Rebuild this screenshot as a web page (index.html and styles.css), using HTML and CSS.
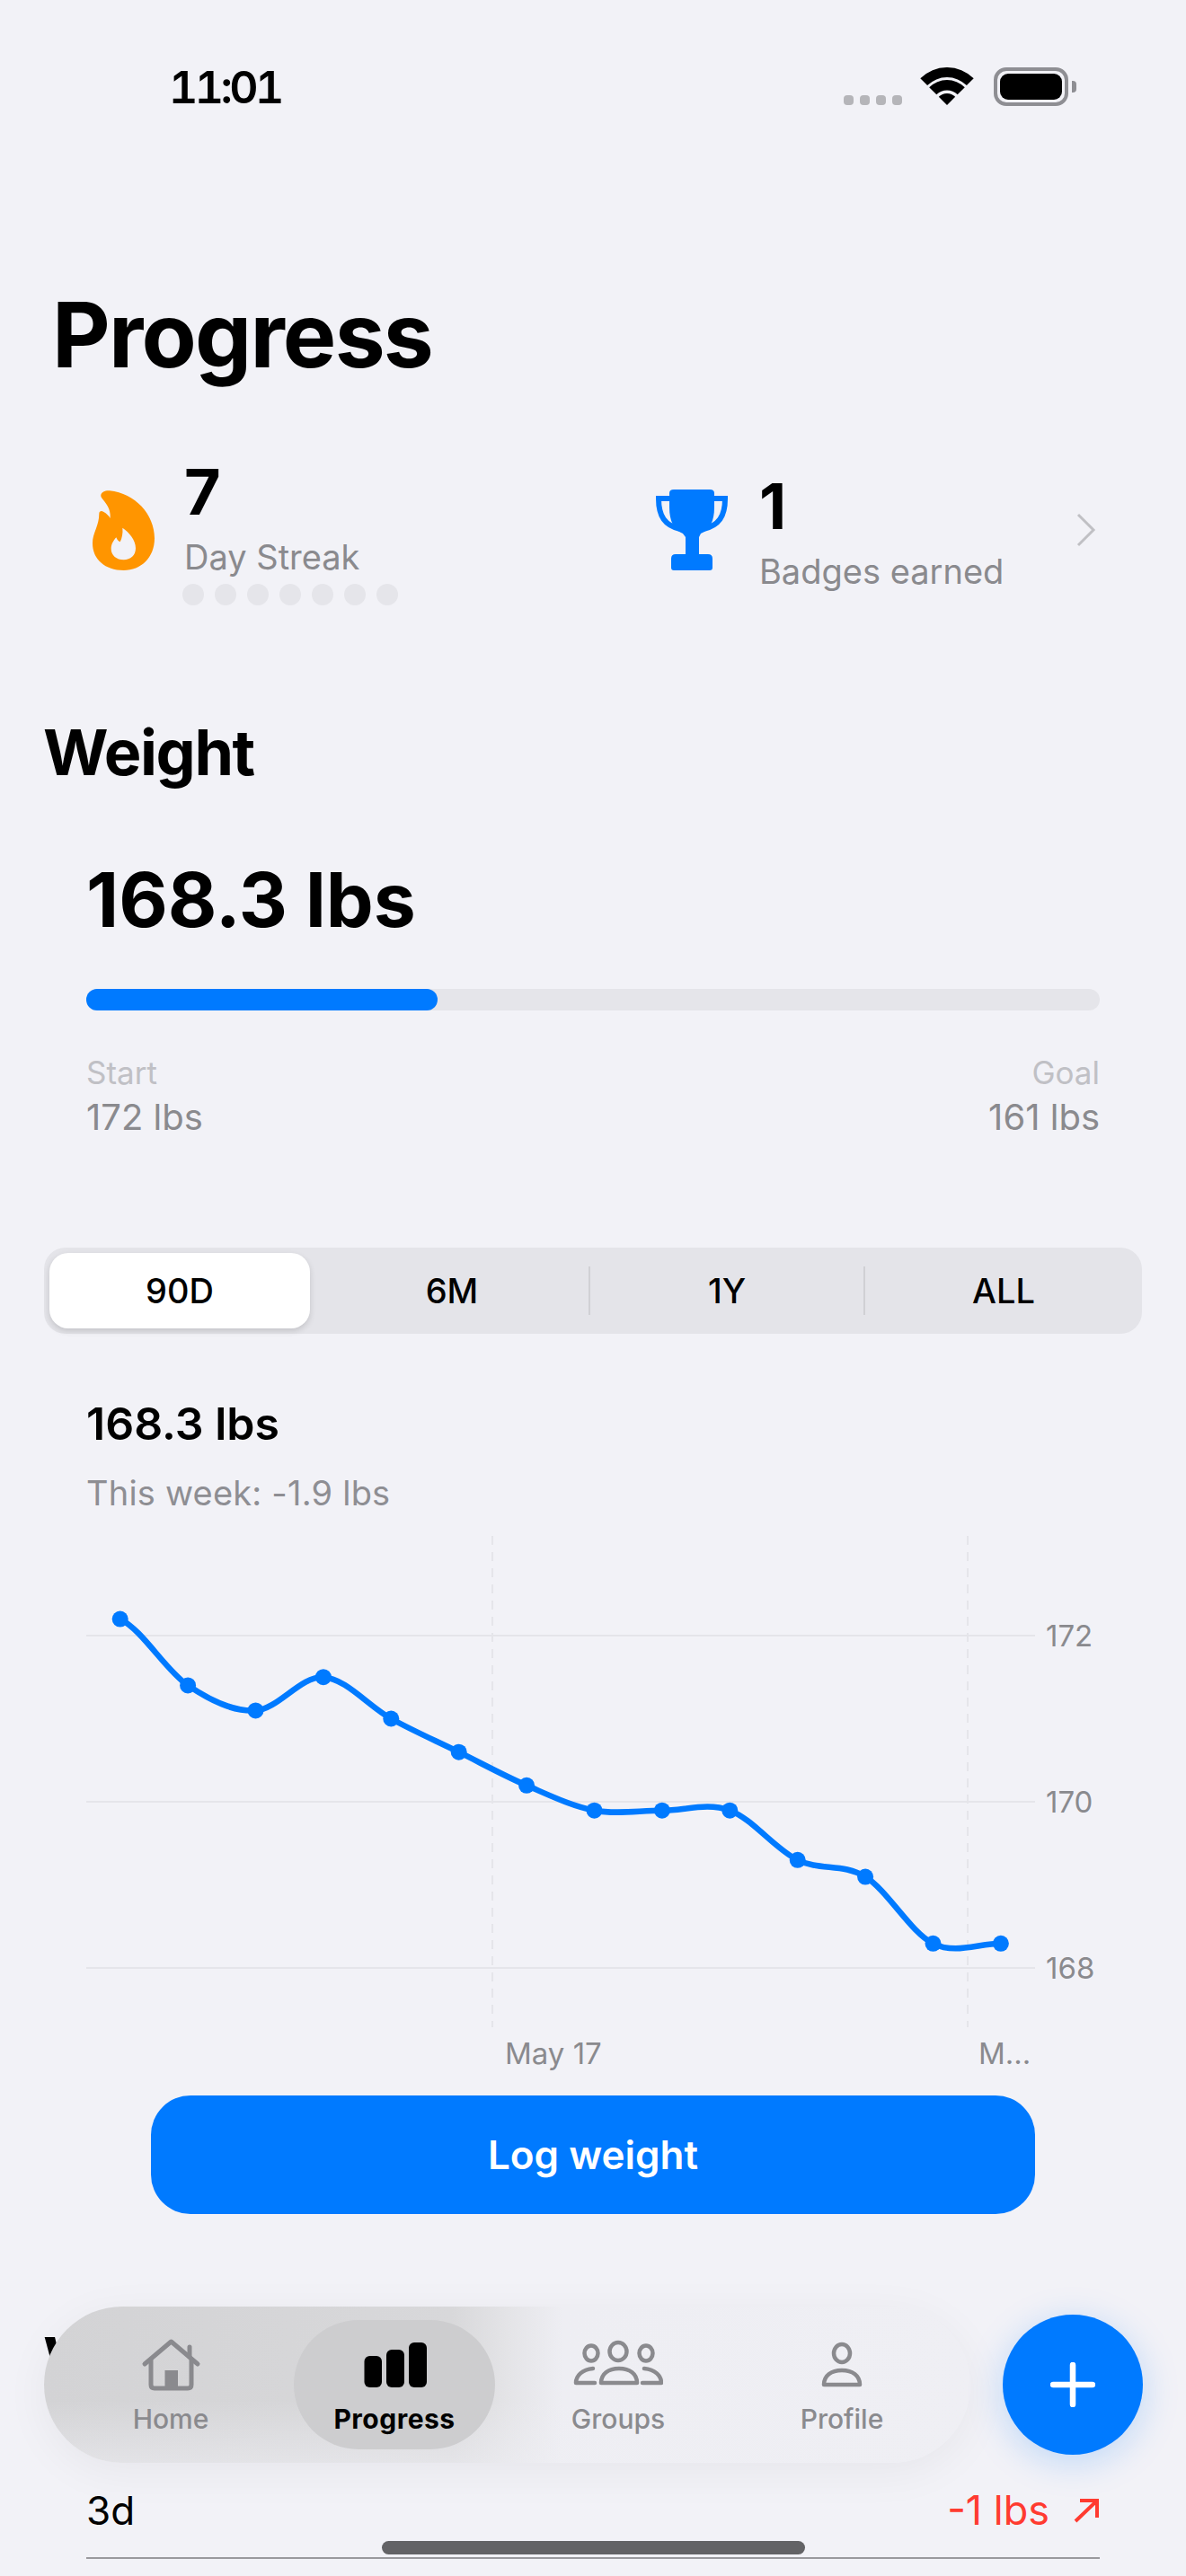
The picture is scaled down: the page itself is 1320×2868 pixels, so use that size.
FILE: index.html
```html
<!DOCTYPE html>
<html lang="en">
<head>
  <meta charset="UTF-8">
  <title>Progress</title>
  <link rel="stylesheet" href="styles.css">
</head>
<body>
<div class="screen">

  <div class="status">
    <span class="time">11:01</span>
    <div class="status-icons">
      <div class="signal"><i></i><i></i><i></i><i></i></div>
      <svg class="wifi" viewBox="-30 -42 60 42" width="60" height="42">
        <path d="M-29.7 -29.7A42 42 0 0 1 29.7 -29.7L21.9 -21.9A31 31 0 0 0 -21.9 -21.9Z"/>
        <path d="M-19.8 -19.8A28 28 0 0 1 19.8 -19.8L11.7 -11.7A16.5 16.5 0 0 0 -11.7 -11.7Z"/>
        <path d="M0 0L-9.2 -9.2A13 13 0 0 1 9.2 -9.2Z"/>
      </svg>
      <div class="battery"><div class="battery-level"></div></div>
      <div class="battery-nub"></div>
    </div>
  </div>

  <h1 class="title">Progress</h1>

  <div class="stats">
    <div class="stat">
      <svg class="flame" viewBox="128 135 207 267" width="69" height="89">
        <path fill="#ff9500" d="M156 150C158 140 170 135 185 136C270 145 335 215 335 295C335 360 290 402 232 402C170 402 128 365 128 312C128 275 150 255 150 212C150 204 158 202 164 206C175 212 183 220 187 228C190 195 170 175 160 162C157 158 155 154 156 150Z"/>
        <path fill="#f2f2f7" d="M228 260C250 275 272 300 272 328C272 352 255 367 232 367C208 367 190 352 190 330C190 315 198 302 207 292C210 300 214 305 220 307C226 295 230 278 228 260Z"/>
      </svg>
      <div>
        <div class="stat-num">7</div>
        <div class="stat-label">Day Streak</div>
        <div class="dots"><i></i><i></i><i></i><i></i><i></i><i></i><i></i></div>
      </div>
    </div>
    <div class="stat stat-badges">
      <svg class="trophy" viewBox="0 0 80 90" width="80" height="90">
        <path class="trophy-handle" d="M16 10H3C3 30 10 40 27 44"/>
        <path class="trophy-handle" d="M64 10H77C77 30 70 40 53 44"/>
        <path fill="#007aff" d="M15 4Q15 0 20 0H60Q65 0 65 4V20C65 35 60 45 50 49L48 53V72H58Q63 72 63 77V87Q63 90 60 90H20Q17 90 17 87V77Q17 72 22 72H33V53L30 49C20 45 15 35 15 20Z"/>
      </svg>
      <div>
        <div class="stat-num">1</div>
        <div class="stat-label">Badges earned</div>
      </div>
      <svg class="chevron" viewBox="0 0 22 38" width="22" height="38">
        <path d="M2 2L19 19L2 36"/>
      </svg>
    </div>
  </div>

  <h2 class="section-title">Weight</h2>

  <div class="weight">
    <div class="weight-now">168.3 lbs</div>
    <div class="bar"><div class="bar-fill"></div></div>
    <div class="weight-ends">
      <div>
        <div class="end-label">Start</div>
        <div class="end-value">172 lbs</div>
      </div>
      <div class="end-right">
        <div class="end-label">Goal</div>
        <div class="end-value">161 lbs</div>
      </div>
    </div>
  </div>

  <div class="segments">
    <div class="seg seg-on">90D</div>
    <div class="seg seg-line">6M</div>
    <div class="seg seg-line">1Y</div>
    <div class="seg">ALL</div>
  </div>

  <div class="chart-head">
    <div class="chart-value">168.3 lbs</div>
    <div class="chart-sub">This week: -1.9 lbs</div>
  </div>

  <svg class="chart" viewBox="96 1700 1130 620" width="1130" height="620">
    <g class="grid">
      <path d="M96 1821H1152"/>
      <path d="M96 2006H1152"/>
      <path d="M96 2191H1152"/>
    </g>
    <g class="grid grid-v">
      <path d="M548 1710V2257"/>
      <path d="M1077 1710V2257"/>
    </g>
    <path class="line" d="M133.7 1802.6C158.8 1814.9 184 1859.4 209.1 1876.4C234.2 1893.4 259.4 1905.9 284.5 1904.4C309.6 1902.9 334.8 1865.7 359.9 1867.2C385 1868.7 410.2 1899.6 435.3 1913.5C460.4 1927.4 485.6 1938.3 510.7 1950.7C535.8 1963.1 561 1977 586.1 1987.8C611.2 1998.6 636.4 2011 661.5 2015.7C686.6 2020.4 711.8 2015.7 736.9 2015.7C762 2015.7 787.2 2006.5 812.3 2015.7C837.4 2024.9 862.6 2058.5 887.7 2070.8C912.8 2083.1 938 2074.1 963.1 2089.6C988.2 2105.1 1013.4 2151.4 1038.5 2163.8C1063.6 2176.2 1088.8 2163.8 1113.9 2163.8"/>
    <g class="points">
      <circle cx="133.7" cy="1802.6" r="9"/>
      <circle cx="209.1" cy="1876.4" r="9"/>
      <circle cx="284.5" cy="1904.4" r="9"/>
      <circle cx="359.9" cy="1867.2" r="9"/>
      <circle cx="435.3" cy="1913.5" r="9"/>
      <circle cx="510.7" cy="1950.7" r="9"/>
      <circle cx="586.1" cy="1987.8" r="9"/>
      <circle cx="661.5" cy="2015.7" r="9"/>
      <circle cx="736.9" cy="2015.7" r="9"/>
      <circle cx="812.3" cy="2015.7" r="9"/>
      <circle cx="887.7" cy="2070.8" r="9"/>
      <circle cx="963.1" cy="2089.6" r="9"/>
      <circle cx="1038.5" cy="2163.8" r="9"/>
      <circle cx="1113.9" cy="2163.8" r="9"/>
    </g>
    <g class="axis">
      <text x="1164" y="1833">172</text>
      <text x="1164" y="2018">170</text>
      <text x="1164" y="2203">168</text>
      <text x="562" y="2298">May 17</text>
      <text x="1089" y="2298">M...</text>
    </g>
  </svg>

  <button class="log-btn">Log weight</button>

  <h2 class="section-title section-next">Weight changes</h2>

  <div class="change">
    <span>3d</span>
    <span class="change-val">-1 lbs
      <svg class="change-arrow" viewBox="0 0 30 30" width="30" height="30">
        <path d="M3 27L26 5M8 4H27V23"/>
      </svg>
    </span>
  </div>

  <nav class="tabbar">
    <div class="tab">
      <svg viewBox="0 0 100 60" width="100" height="60">
        <g class="tab-line">
          <path d="M21 29L50.5 4L80 29"/>
          <path d="M71 21V10"/>
          <path d="M28 25V52Q28 56 32 56H69Q73 56 73 52V25"/>
        </g>
        <rect class="tab-fill" x="43.5" y="36" width="14.5" height="20"/>
      </svg>
      <span>Home</span>
    </div>
    <div class="tab tab-on">
      <svg viewBox="0 0 100 60" width="100" height="60">
        <rect x="16.5" y="20" width="19.5" height="35" rx="6"/>
        <rect x="41" y="13" width="20" height="42" rx="6"/>
        <rect x="66" y="5" width="20" height="50" rx="6"/>
      </svg>
      <span>Progress</span>
    </div>
    <div class="tab">
      <svg viewBox="0 0 100 60" width="100" height="60">
        <g class="tab-line tab-thin">
          <ellipse cx="20" cy="17" rx="7.5" ry="8.5"/>
          <ellipse cx="50" cy="15" rx="9.5" ry="10"/>
          <ellipse cx="81" cy="17" rx="7.5" ry="8.5"/>
          <path d="M31 50C31 40 39 34 51 34C63 34 71 40 71 50Z"/>
          <path d="M24 50H3C3 42 10 35 22 34"/>
          <path d="M77 50H98C98 42 91 35 79 34"/>
        </g>
      </svg>
      <span>Groups</span>
    </div>
    <div class="tab">
      <svg viewBox="0 0 100 60" width="100" height="60">
        <g class="tab-line tab-thin">
          <ellipse cx="50" cy="17" rx="9" ry="10"/>
          <path d="M30 52C30 42 38 36 50 36C62 36 70 42 70 52Z"/>
        </g>
      </svg>
      <span>Profile</span>
    </div>
  </nav>

  <div class="fab">
    <svg viewBox="0 0 50 50" width="50" height="50">
      <path d="M25 3V47M3 25H47"/>
    </svg>
  </div>

  <div class="home-indicator"></div>
</div>
</body>
</html>
```

FILE: styles.css
```css
html, body { margin:0; padding:0; }
body { font-family: Inter, "Noto Sans", sans-serif; background:#f2f2f7; color:#000; }
.screen { position:relative; width:1320px; height:2868px; overflow:hidden; background:#f2f2f7; }

/* status bar */
.status { display:flex; justify-content:space-between; height:246px; box-sizing:border-box; padding:75px 122px 0 188px; }
.time { font-size:50px; font-weight:600; line-height:44px; letter-spacing:-3.6px; font-variant-numeric:tabular-nums; }
.status-icons { display:flex; align-items:flex-start; height:43px; }
.signal { display:flex; gap:7px; margin:31px 20px 0 0; }
.signal i { width:11px; height:11px; border-radius:4px; background:#b5b5b9; }
.wifi { fill:#000; margin-right:22px; }
.battery { width:83px; height:43px; box-sizing:border-box; border:4px solid #8e8e93; border-radius:14px; padding:3px; }
.battery-level { height:100%; background:#000; border-radius:9px; }
.battery-nub { width:5px; height:13px; margin:15px 0 0 4px; background:#8e8e93; border-radius:0 4px 4px 0; }

/* headings */
.title { margin:77px 0 0 58px; font-size:100px; line-height:100px; font-weight:700; letter-spacing:-1.8px; }
.section-title { margin:0 0 0 48px; font-size:70px; line-height:76px; font-weight:700; letter-spacing:-1.4px; }
.section-next { margin-top:125px; }

/* streak and badges */
.stats { display:grid; grid-template-columns:627px 1fr; height:152px; margin:99px 100px 126px 103px; align-items:center; }
.stat { display:flex; align-items:center; }
.flame { margin:0 33px 16px 0; }
.trophy { margin:0 35px 16px 0; }
.trophy-handle { fill:none; stroke:#007aff; stroke-width:6px; }
.stat-num { font-size:70px; line-height:52px; font-weight:700; }
.stat-label { margin-top:24px; font-size:38px; line-height:44px; color:#8a8a8e; }
.dots { display:flex; gap:12px; margin:8px 0 0 -2px; }
.dots i { width:24px; height:24px; border-radius:50%; background:#e5e5ea; }
.stat-badges .chevron { margin-left:auto; margin-bottom:16px; }
.chevron path { fill:none; stroke:#c0c0c4; stroke-width:3px; }

/* weight */
.weight { margin:0 96px; padding-top:81px; }
.weight-now { font-size:84px; line-height:90px; font-weight:700; }
.bar { height:24px; margin-top:54px; background:#e5e5ea; border-radius:12px; }
.bar-fill { width:391px; height:100%; background:#007aff; border-radius:12px; }
.weight-ends { display:flex; justify-content:space-between; margin-top:49px; }
.end-right { text-align:right; }
.end-label { font-size:35px; line-height:40px; color:#c0c0c5; }
.end-value { margin-top:8px; font-size:40px; line-height:44px; color:#8a8a8e; }

/* range picker */
.segments { display:grid; grid-template-columns:302px 306px 306px 1fr; align-items:center; height:96px; margin:123px 49px 0; background:#e4e4e9; border-radius:24px; }
.seg { height:54px; line-height:54px; text-align:center; font-size:38px; font-weight:500; }
.seg-line { border-right:2px solid #d0d0d4; box-sizing:border-box; }
.seg-on { width:290px; height:84px; line-height:84px; margin-left:6px; background:#fff; border-radius:21px; box-shadow:0 3px 7px rgba(0,0,0,.14); }

/* chart */
.chart-head { margin:72px 96px 0; }
.chart-value { font-size:50px; line-height:56px; font-weight:600; }
.chart-sub { margin-top:27px; font-size:38px; line-height:44px; letter-spacing:.2px; color:#8e8e93; }
.chart { display:block; margin:16px 0 0 96px; }
.grid path { fill:none; stroke:#e5e5ea; stroke-width:2px; }
.grid-v path { stroke-dasharray:10 8; }
.line { fill:none; stroke:#007aff; stroke-width:6.5px; }
.points circle { fill:#007aff; }
.axis text { font-size:33px; fill:#8a8a8e; }

.log-btn { display:block; width:984px; height:132px; margin:13px 0 0 168px; border:0; border-radius:44px; background:#007aff; color:#fff; font-family:inherit; font-size:44px; font-weight:600; }

/* last row */
.change { display:flex; justify-content:space-between; margin:104px 96px 0; padding-bottom:27px; border-bottom:2px solid #9a9a9e; font-size:44px; line-height:50px; }
.change-val { display:flex; align-items:center; gap:26px; font-size:45px; color:#ff3b30; }
.change-arrow path { fill:none; stroke:#ff3b30; stroke-width:4px; }

/* floating tab bar */
.tabbar { position:absolute; left:49px; top:2568px; width:1031px; height:174px; box-sizing:border-box; display:flex; padding:15px 16.5px; border-radius:87px; background:linear-gradient(180deg, rgba(239,239,244,0) 60%, rgba(239,239,244,.55) 100%), linear-gradient(90deg, #d3d3d5 0%, #d8d8da 44%, #e4e4e7 50%, #eeeef3 56%, #efeff4 100%); box-shadow:0 10px 50px rgba(0,0,0,.05); }
.tab { box-sizing:border-box; display:flex; flex-direction:column; align-items:center; width:249px; padding-top:20px; color:#8a8a8e; font-size:30px; line-height:36px; font-weight:500; }
.tab span { margin-top:12px; }
.tab-on { width:224px; margin:0 12.5px; border-radius:72px; background:#cdcdcf; color:#000; font-weight:700; letter-spacing:.5px; }
.tab-line { fill:none; stroke:#8a8a8e; stroke-width:5px; stroke-linecap:round; stroke-linejoin:round; }
.tab-thin { stroke-width:4.5px; }
.tab-fill { fill:#8a8a8e; }

.fab { position:absolute; left:1116px; top:2577px; width:156px; height:156px; display:flex; align-items:center; justify-content:center; border-radius:50%; background:#007aff; box-shadow:0 8px 40px rgba(0,122,255,.22); }
.fab path { fill:none; stroke:#fff; stroke-width:6.5px; stroke-linecap:round; }

.home-indicator { position:absolute; left:425px; top:2829px; width:471px; height:15px; border-radius:8px; background:#636366; }
```
